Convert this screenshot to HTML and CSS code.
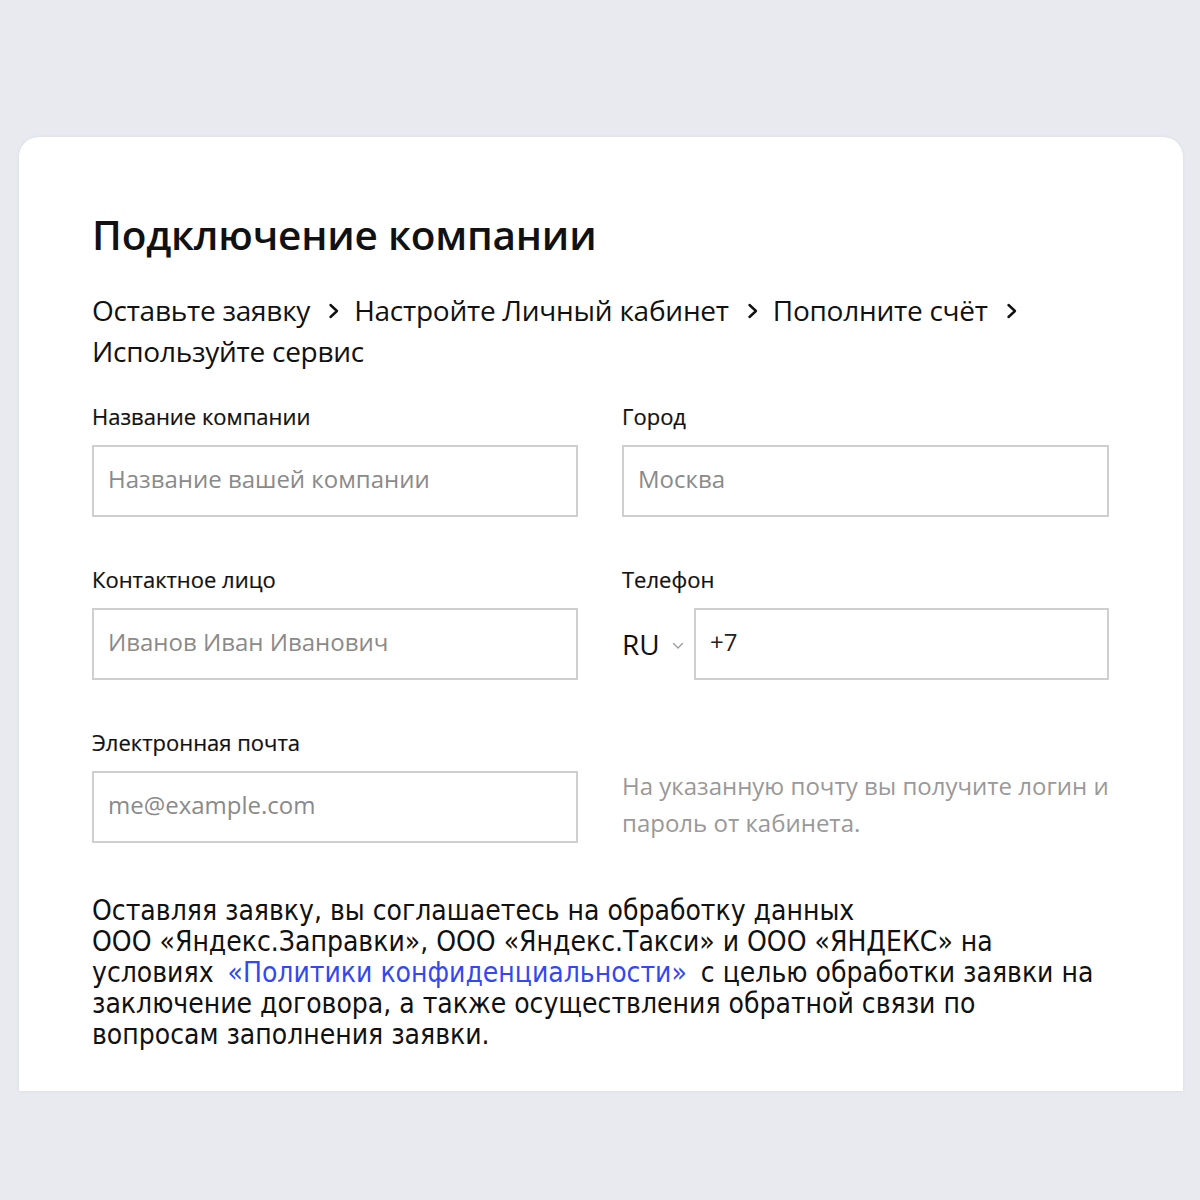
FILE: index.html
```html
<!DOCTYPE html>
<html lang="ru">
<head>
<meta charset="utf-8">
<link rel="stylesheet" href="styles.css">
</head>
<body>
<div class="page">
  <div class="card">
    <h1 class="title">Подключение компании</h1>
    <div class="steps">
      <span class="step">Оставьте заявку</span>
      <svg class="chev" viewBox="0 0 12 16" width="12" height="16"><path d="M2.5 2 L9 8 L2.5 14" fill="none" stroke="#111" stroke-width="2.4" stroke-linejoin="round" stroke-linecap="round"/></svg>
      <span class="step">Настройте Личный кабинет</span>
      <svg class="chev" viewBox="0 0 12 16" width="12" height="16"><path d="M2.5 2 L9 8 L2.5 14" fill="none" stroke="#111" stroke-width="2.4" stroke-linejoin="round" stroke-linecap="round"/></svg>
      <span class="step">Пополните счёт</span>
      <svg class="chev" viewBox="0 0 12 16" width="12" height="16"><path d="M2.5 2 L9 8 L2.5 14" fill="none" stroke="#111" stroke-width="2.4" stroke-linejoin="round" stroke-linecap="round"/></svg>
      <span class="step">Используйте сервис</span>
    </div>
    <div class="form">
      <div class="field">
        <div class="label">Название компании</div>
        <div class="input placeholder">Название вашей компании</div>
      </div>
      <div class="field">
        <div class="label">Город</div>
        <div class="input placeholder">Москва</div>
      </div>
      <div class="field">
        <div class="label">Контактное лицо</div>
        <div class="input placeholder">Иванов Иван Иванович</div>
      </div>
      <div class="field">
        <div class="label">Телефон</div>
        <div class="phone">
          <div class="country">RU
            <svg class="down" viewBox="0 0 12 8" width="12" height="8"><path d="M1.5 1.5 L6 6 L10.5 1.5" fill="none" stroke="#9a9a9a" stroke-width="1.3" stroke-linecap="round" stroke-linejoin="round"/></svg>
          </div>
          <div class="input value">+7</div>
        </div>
      </div>
      <div class="field">
        <div class="label">Электронная почта</div>
        <div class="input placeholder">me@example.com</div>
      </div>
      <div class="field hint-cell">
        <p class="hint">На указанную почту вы получите логин и пароль от кабинета.</p>
      </div>
    </div>
    <p class="agree">Оставляя заявку, вы соглашаетесь на обработку данных<br>ООО «Яндекс.Заправки», ООО «Яндекс.Такси» и ООО «ЯНДЕКС» на<br>условиях <a class="link" href="#">«Политики конфиденциальности»</a> с целью обработки заявки на<br>заключение договора, а также осуществления обратной связи по<br>вопросам заполнения заявки.</p>
  </div>
</div>
</body>
</html>
```

FILE: styles.css
```css
* { box-sizing: border-box; }
html, body {
  margin: 0;
  padding: 0;
  background: #e8eaf0;
}
body {
  font-family: "Open Sans", "Noto Sans", sans-serif;
  color: #111;
  height: 1200px;
  overflow: hidden;
}
.page {
  padding: 137px 17px 0 19px;
}
.card {
  background: #fff;
  border-radius: 20px 20px 0 0;
  height: 954px;
  padding: 69px 73px 0 73px;
  box-shadow: 0 0 3px rgba(120, 130, 150, 0.15);
}
.title {
  margin: 0;
  font-size: 40.5px;
  font-weight: 600;
  line-height: 58px;
  letter-spacing: -0.2px;
}
.steps {
  margin-top: 26px;
  font-size: 28px;
  line-height: 41px;
  display: flex;
  flex-wrap: wrap;
  align-items: center;
  max-width: 1000px;
  letter-spacing: -0.25px;
}
.chev {
  margin: 0 14px 0 18px;
}
.form {
  margin-top: 30px;
  display: grid;
  grid-template-columns: 486px 487px;
  column-gap: 44px;
  row-gap: 48px;
}
.label {
  font-size: 22px;
  font-weight: 500;
  line-height: 28px;
  margin-bottom: 15px;
  -webkit-text-stroke: 0.2px #111;
}
.input {
  height: 72px;
  border: 2px solid #cfcfcf;
  display: flex;
  align-items: center;
  padding: 0 14px 5px 14px;
  font-size: 24px;
}
.placeholder { color: #8a8a8a; }
.value { color: #222; }
.phone {
  display: flex;
  align-items: center;
}
.phone .input { flex: 1; }
.country {
  width: 72px;
  font-size: 28px;
  display: flex;
  align-items: center;
}
.down { margin-left: 12px; margin-top: 4px; }
.hint-cell {
  display: flex;
  align-items: flex-end;
}
.hint {
  margin: 0 0 2px 0;
  font-size: 24px;
  line-height: 37px;
  color: #999;
}
.agree {
  margin: 52px 0 0 0;
  font-family: "DejaVu Sans Condensed", "Liberation Sans Narrow", sans-serif;
  font-size: 28px;
  line-height: 31px;
  color: #111;
}
.link {
  color: #3448f0;
  text-decoration: none;
  margin: 0 6px;
}
```
